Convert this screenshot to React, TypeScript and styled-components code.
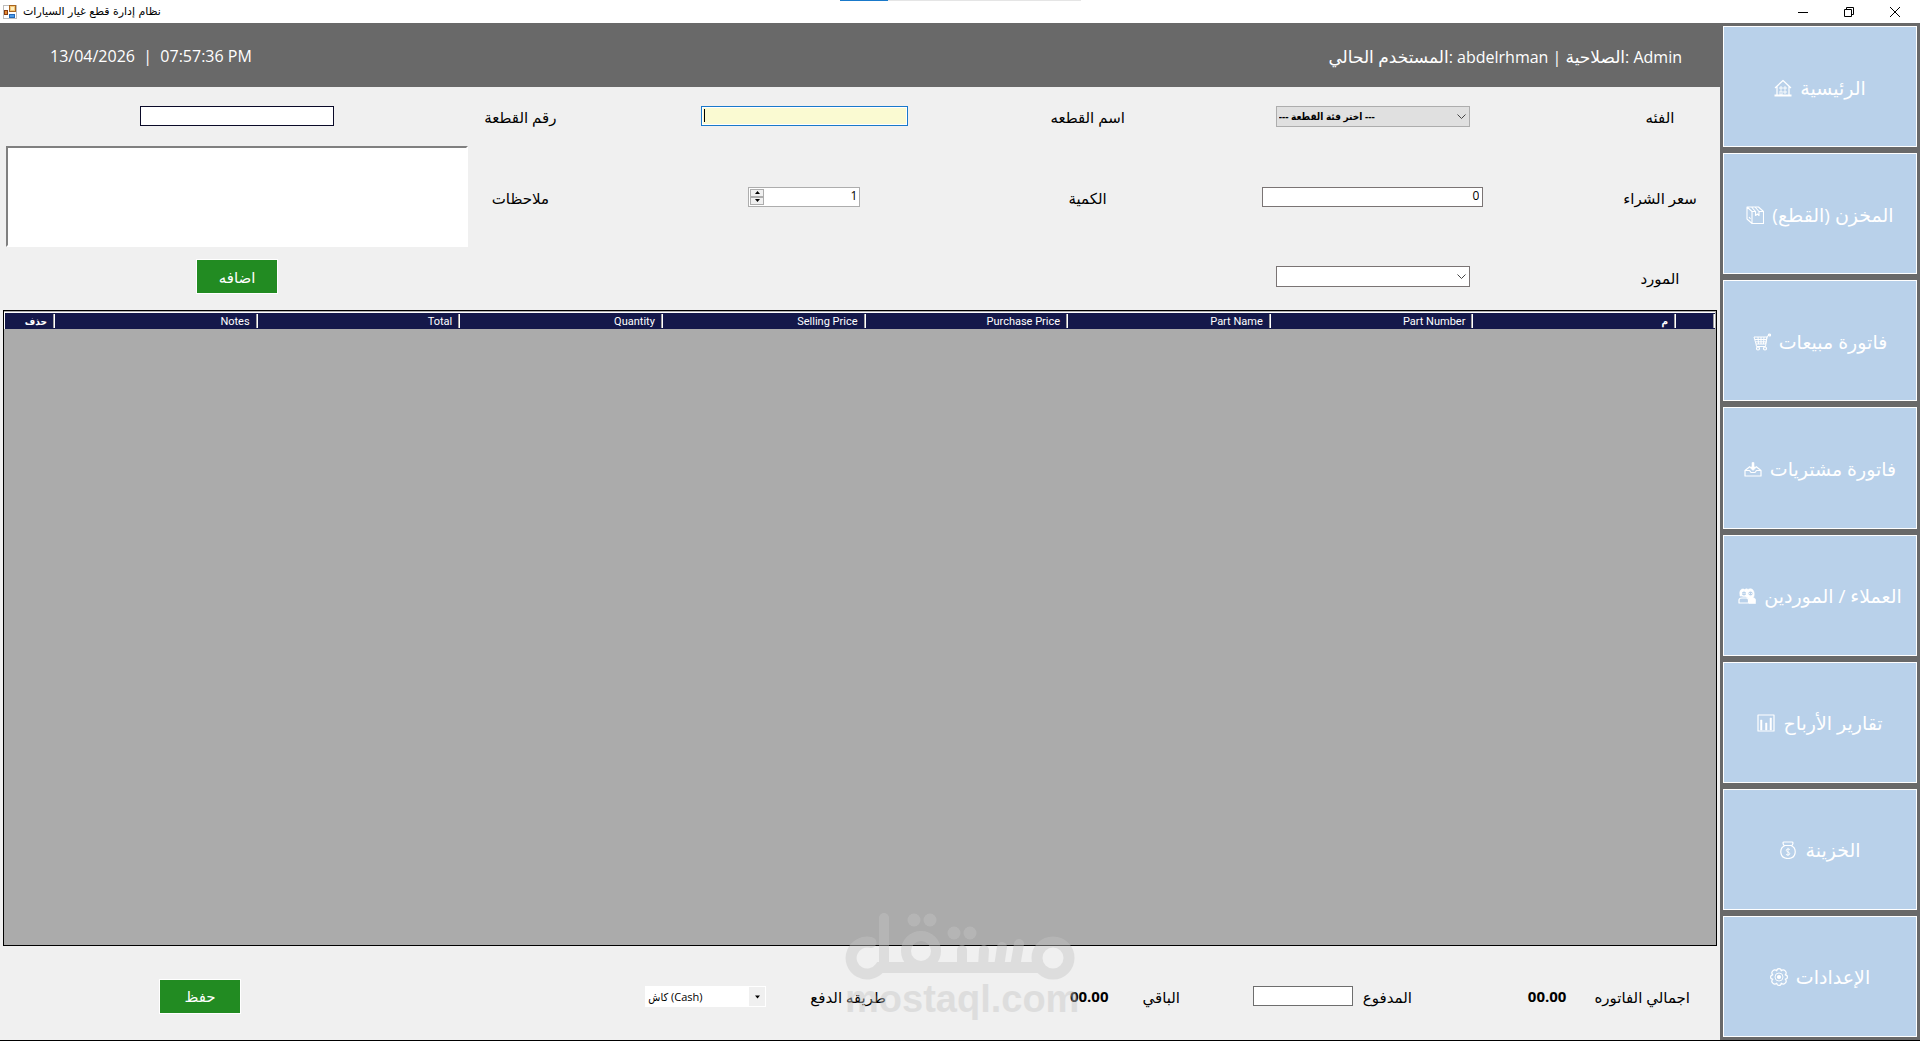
import React from 'react';
import styled, { createGlobalStyle } from 'styled-components';

const GlobalStyle = createGlobalStyle`
  *, *::before, *::after { box-sizing: border-box; }
  body { margin: 0; background: #f0f0f0; }
  body, button, input, select, textarea {
    font-family: 'Open Sans', 'DejaVu Sans', sans-serif;
    font-size: 15px;
    color: #000;
  }
`;

const Window = styled.div`
  position: relative;
  display: flex;
  flex-direction: column;
  min-height: 100vh;
  border-bottom: 1px solid #000;
`;

const TitleBar = styled.header`
  display: flex;
  align-items: center;
  height: 23px;
  padding: 0 2px 0 3px;
  background: #fff;
`;

const Title = styled.h1`
  flex: 1;
  margin: 0 0 0 4px;
  font: 11px/20px 'DejaVu Sans', sans-serif;
`;

const WindowButton = styled.button`
  display: grid;
  place-items: center;
  width: 46px;
  height: 20px;
  padding: 0;
  border: 0;
  background: transparent;
`;

const LoadingLine = styled.div`
  position: absolute;
  top: 0;
  left: 840px;
  width: 241px;
  height: 1px;
  background: linear-gradient(90deg, #1979ca 20%, #e5e5e5 20%);
`;

const Body = styled.div`
  flex: 1;
  display: grid;
  grid-template-columns: minmax(0, 1fr) 200px;
`;

const Main = styled.main`
  position: relative;
  display: flex;
  flex-direction: column;
`;

const StatusBar = styled.div`
  display: flex;
  justify-content: space-between;
  align-items: center;
  height: 64px;
  padding: 2px 38px 0 50px;
  background: #696969;
  color: #fff;
  font-size: 16px;
  white-space: pre;
`;

const ArabicPart = styled.span`
  font-size: 17px;
`;

const Form = styled.form`
  direction: rtl;
  display: grid;
  grid-template-columns: 100fr 474fr 96fr 470fr 98fr 468fr;
  grid-template-rows: 58px 103px 57px;
  align-items: center;
  justify-items: center;
  padding: 0 10px 5px 3px;
`;

const Label = styled.label`
  padding-top: 2px;
  line-height: 20px;
  white-space: nowrap;
`;

const LastCell = styled.div`
  grid-column: 6;
`;

const TextInput = styled.input<{ $width: number; $edge?: string }>`
  width: ${(p) => p.$width}px;
  height: 20px;
  padding: 0 3px 2px;
  border: 1px solid ${(p) => p.$edge ?? '#6e6e6e'};
  border-radius: 0;
  background: #fff;
  font-size: 12px;
  text-align: right;
  direction: ltr;
  outline: 0;
`;

const ActiveInput = styled(TextInput)`
  background: linear-gradient(#000, #000) 2px 2px / 1px 13px no-repeat, #fafad2;
  box-shadow: inset 0 0 0 1px #fff;
`;

const Notes = styled.textarea`
  width: calc(100% - 6px);
  height: 101px;
  resize: none;
  border: 2px solid;
  border-color: #808080 #fff #fff #808080;
  border-radius: 0;
  background: #fff;
  outline: 0;
`;

const SelectBox = styled.div<{ $width: number }>`
  position: relative;
  display: flex;
  align-items: center;
  direction: ltr;
  width: ${(p) => p.$width}px;
  height: 21px;

  svg { position: absolute; right: 3px; pointer-events: none; }
`;

const Select = styled.select<{ $kind: 'disabled' | 'plain' | 'flat' }>`
  display: block;
  appearance: none;
  width: 100%;
  height: 100%;
  padding: 0 2px;
  border: 1px solid ${(p) => (p.$kind === 'disabled' ? '#adadad' : p.$kind === 'flat' ? '#fff' : '#7a7474')};
  border-radius: 0;
  background: ${(p) => (p.$kind === 'disabled' ? '#e0e0e0' : p.$kind === 'flat' ? 'linear-gradient(90deg, transparent calc(100% - 16px), #f0f0f0 0), #fff' : '#fff')};
  font: 11px 'Open Sans', 'DejaVu Sans Condensed', 'DejaVu Sans', sans-serif;
  font-size: ${(p) => (p.$kind === 'disabled' ? 10 : 11)}px;
  font-weight: ${(p) => (p.$kind === 'disabled' ? 700 : 400)};
  outline: 0;
`;

const Stepper = styled.div`
  display: flex;
  direction: ltr;
  width: 112px;
  height: 20px;
  padding: 1px;
  border: 1px solid #adadad;
  background: #fff;
`;

const StepButtons = styled.div`
  display: grid;
  width: 14px;
`;

const StepButton = styled.button`
  display: grid;
  place-items: center;
  padding: 0;
  border: 1px solid #adadad;
  background: #f0f0f0;
  min-height: 0;
`;

const StepValue = styled.input`
  flex: 1;
  min-width: 0;
  padding: 0 1px 2px;
  border: 0;
  background: transparent;
  font-size: 12px;
  text-align: right;
  appearance: textfield;
  outline: 0;
  &::-webkit-inner-spin-button { display: none; }
`;

const ActionButton = styled.button`
  display: block;
  width: 82px;
  height: 35px;
  padding: 0;
  border: 1px solid #fff;
  background: #228b22;
  color: #fff;
`;

const GridFrame = styled.section`
  flex: 1;
  margin: 0 3px;
  padding: 1px 1px 0 0;
  border: 1px solid #000;
  background: #ababab;
`;

const PartsTable = styled.table`
  direction: rtl;
  width: 100%;
  table-layout: fixed;
  border-spacing: 0;
  border-top: 1px solid #fff;
  border-left: 1px solid #fff;
`;

const HeadCell = styled.th<{ $width?: number }>`
  width: ${(p) => (p.$width ? p.$width + 'px' : 'auto')};
  height: 16px;
  padding: 0 8px 0 0;
  background: linear-gradient(#fff, #fff) right center / 1px 14px no-repeat,
    linear-gradient(#a0a0a0, #a0a0a0) right 1px center / 1px 14px no-repeat, #14184a;
  color: #fff;
  font: 11px/15px Roboto, 'DejaVu Sans', sans-serif;
  text-align: right;

  &:lang(ar) { font: 700 10px/15px 'DejaVu Sans Condensed', 'DejaVu Sans', sans-serif; }
`;

const Summary = styled.form`
  direction: rtl;
  display: grid;
  grid-template-columns: 278fr 232fr 294fr 645fr 241fr;
  align-items: center;
  height: 94px;
  padding: 6px 30px 0 0;
`;

const Pair = styled.div<{ $gap: number }>`
  display: flex;
  align-items: center;
  gap: ${(p) => p.$gap}px;
`;

const Amount = styled.output`
  font-weight: 700;
  line-height: 20px;
`;

const Watermark = styled.div`
  position: absolute;
  left: 845px;
  bottom: 24px;
  width: 230px;
  opacity: 0.42;
  color: #c5c5c5;
  font: 700 38px/34px 'Liberation Sans', sans-serif;
  white-space: nowrap;
  pointer-events: none;

  svg { display: block; }
`;

const Sidebar = styled.nav`
  display: grid;
  grid-auto-rows: 1fr;
  gap: 6px;
  padding: 3px;
  background: #696969;
`;

const NavButton = styled.button`
  direction: rtl;
  display: flex;
  align-items: center;
  justify-content: center;
  gap: 8px;
  padding: 2px 0 0;
  border: 1px solid #fff;
  background: #b9d1ea;
  color: #fff;
  font-size: 19px;
  white-space: nowrap;
`;

const Glyph = ({ children }: { children: React.ReactNode }) => (
  <svg width="18" height="18" viewBox="0 0 18 18" fill="none" stroke="#fff" strokeWidth="1.2" strokeLinejoin="round" aria-hidden="true">
    {children}
  </svg>
);

const AppIcon = () => (
  <svg width="16" height="16" viewBox="0 0 16 16" aria-hidden="true">
    <rect x=".5" y="1.500" width="13" height="13" fill="#fff" stroke="#bdbdbd" />
    <rect x="6.500" y="1.500" width="6" height="6" fill="#f5c878" stroke="#a8641e" />
    <rect x="8" y="3" width="3" height="3" fill="#fff0c0" />
    <rect x="1.500" y="6.500" width="3" height="4" fill="#e88a30" stroke="#873c10" />
    <rect x="6.500" y="10.500" width="5" height="3" fill="#4c9be8" stroke="#2469b8" />
  </svg>
);

const Chevron = () => (
  <svg width="11" height="9" viewBox="0 0 11 9" fill="none" stroke="#444" aria-hidden="true">
    <path d="M1.500 2.500 5.500 6.500 9.500 2.500" />
  </svg>
);

const DropArrow = () => (
  <svg width="11" height="9" viewBox="0 0 11 9" aria-hidden="true">
    <path d="M3 3.500H8L5.500 6.500Z" />
  </svg>
);

const StepArrow = ({ up }: { up?: boolean }) => (
  <svg width="5" height="3" viewBox="0 0 5 3" aria-hidden="true">
    <path d={up ? 'M0 3 2.500 0 5 3Z' : 'M0 0H5L2.500 3Z'} />
  </svg>
);

const navItems = [
  {
    text: 'الرئيسية',
    icon: <><path d="M1 9 9 1.500 17 9M3 7.500V16M15 7.500V16" /><path d="M.5 16.500H17.500" strokeWidth="2" /><path d="M6 8H8V10H6ZM10 8H12V10H10ZM6 12H8V16H6ZM10 12H12V14H10Z" strokeWidth=".9" /></>,
  },
  {
    text: 'المخزن (القطع)',
    icon: <path d="M1 1H12.500L17.500 5.500V17.500H6L1 13ZM1 1 6 5.500V17.500M6 5.500H9.500L5.500 1M9.500 5.500V9.500L11.500 8 13 9.500V5.500L9 1M13 5.500H17.500M3 11 4.500 13" strokeWidth="1.100" />,
  },
  {
    text: 'فاتورة مبيعات',
    icon: <><path d="M1 4H14L12.500 11H3ZM17 2H15.500L14 4 12.500 13.500H3.500L3 11M2 6.500H13M2.500 8.800H12.500M5 4 5.500 11M8 4V11M11 4 10.500 11" strokeWidth="1" /><circle cx="5" cy="15.500" r="1.500" /><circle cx="12" cy="15.500" r="1.500" /><circle cx="16.500" cy="2" r="1" /></>,
  },
  {
    text: 'فاتورة مشتريات',
    icon: <><path d="M6 6.500 1 10.500V16H17V10.500L12 6.500M1 10.500H5.500L7 12.500H11L12.500 10.500H17" /><path d="M8 2.500H10V7H12.500L9 10.500 5.500 7H8Z" fill="#fff" strokeWidth=".6" /></>,
  },
  {
    text: 'العملاء / الموردين',
    icon: <><path d="M2 8C1 3 4 1 6.500 2.500Q9 1 10 2.500C14 0 17 4 16 9L15 11C18 11 18 13 17.500 16.500H11V12L7 9H2Z" fill="#fff" strokeWidth=".6" /><circle cx="6" cy="6.500" r="2.700" fill="#b9d1ea" /><circle cx="12.500" cy="6.500" r="2.700" fill="#b9d1ea" /><path d="M1 16V13Q1 11 4 11H8Q10.500 11 10.500 13V16Z" fill="#b9d1ea" /><path d="M5 6V7M7 6V7M11.500 6V7M13.500 6V7" strokeWidth=".8" /></>,
  },
  {
    text: 'تقارير الأرباح',
    icon: <><path d="M1 1H17V17H1Z" /><path d="M3.500 6H5V16H3.500ZM8.500 9H10V16H8.500ZM13 4H14.500V16H13Z" fill="#fff" strokeWidth=".5" /></>,
  },
  {
    text: 'الخزينة',
    icon: <><path d="M5 4.500Q3 1 5 1H13Q15 1 13 4.500ZM6 4.500C0 7 0 17.500 9 17.500S18 7 12 4.500" /><path d="M11 8.500Q9 7.500 7.500 8.500T9 11T10.500 13.500Q9 14.500 7 13.500M9 6.800V15" strokeWidth=".9" /></>,
  },
  {
    text: 'الإعدادات',
    icon: <><path d="M6.800 2.800A2.200 2.200 0 0 1 11.200 2.800A2.200 2.200 0 0 1 15.200 6.800A2.200 2.200 0 0 1 15.200 11.200A2.200 2.200 0 0 1 11.200 15.200A2.200 2.200 0 0 1 6.800 15.200A2.200 2.200 0 0 1 2.800 11.200A2.200 2.200 0 0 1 2.800 6.800A2.200 2.200 0 0 1 6.800 2.800Z" /><circle cx="9" cy="9" r="4" strokeWidth=".9" /><circle cx="9" cy="9" r="1.500" fill="#fff" /></>,
  },
];

const columns = ['Part Number', 'Part Name', 'Purchase Price', 'Selling Price', 'Quantity', 'Total', 'Notes'];

const MostaqlLogo = () => (
  <svg width="230" height="69" viewBox="0 0 230 69" fill="none" stroke="#c5c5c5" strokeLinecap="round" aria-hidden="true">
    <path d="M26 29.500A16 16 0 1 0 35 54.500H192" strokeWidth="11" />
    <path d="M39 5V52" strokeWidth="10" />
    <circle cx="76" cy="38" r="15" strokeWidth="10" />
    <path d="M117 54V37M138 54 139 37M154 54 157 34M170 54 174 31" strokeWidth="10" />
    <circle cx="208" cy="45" r="16" strokeWidth="11" />
    <g fill="#c5c5c5" stroke="none">
      <circle cx="69" cy="7" r="6.500" /><circle cx="85" cy="7" r="6.500" />
      <circle cx="109" cy="20" r="6.500" /><circle cx="125" cy="20" r="6.500" />
    </g>
  </svg>
);

export default function App() {
  return (
    <Window>
      <GlobalStyle />
      <TitleBar>
        <AppIcon />
        <Title>نظام إدارة قطع غيار السيارات</Title>
        <WindowButton aria-label="Minimize">
          <svg width="10" height="10" stroke="#000"><path d="M0 5.500H10" /></svg>
        </WindowButton>
        <WindowButton aria-label="Restore">
          <svg width="10" height="10" fill="none" stroke="#000"><path d="M.5 2.500H7.500V9.500H.5ZM2.500 2.500V.5H9.500V7.500H7.500" /></svg>
        </WindowButton>
        <WindowButton aria-label="Close">
          <svg width="10" height="10" stroke="#000"><path d="M0 0 10 10M10 0 0 10" /></svg>
        </WindowButton>
      </TitleBar>
      <LoadingLine />
      <Body>
        <Main>
          <StatusBar>
            <time>13/04/2026{'  |  '}07:57:36 PM</time>
            <span><ArabicPart>المستخدم الحالي</ArabicPart>: abdelrhman | <ArabicPart>الصلاحية</ArabicPart>: Admin</span>
          </StatusBar>
          <Form>
            <Label htmlFor="category">الفئه</Label>
            <SelectBox $width={194}>
              <Select id="category" $kind="disabled"><option>--- اختر فئة القطعة ---</option></Select>
              <Chevron />
            </SelectBox>
            <Label htmlFor="partName">اسم القطعه</Label>
            <ActiveInput id="partName" $width={207} $edge="#1979ca" />
            <Label htmlFor="partNumber">رقم القطعة</Label>
            <TextInput id="partNumber" $width={194} $edge="#0a0a28" />

            <Label htmlFor="price">سعر الشراء</Label>
            <TextInput id="price" $width={221} $edge="#7a7474" defaultValue="0" />
            <Label htmlFor="quantity">الكمية</Label>
            <Stepper>
              <StepButtons>
                <StepButton type="button" aria-label="+"><StepArrow up /></StepButton>
                <StepButton type="button" aria-label="-"><StepArrow /></StepButton>
              </StepButtons>
              <StepValue id="quantity" type="number" defaultValue="1" />
            </Stepper>
            <Label htmlFor="notes">ملاحظات</Label>
            <Notes id="notes" />

            <Label htmlFor="supplier">المورد</Label>
            <SelectBox $width={194}>
              <Select id="supplier" $kind="plain"><option /></Select>
              <Chevron />
            </SelectBox>
            <LastCell><ActionButton type="button">اضافه</ActionButton></LastCell>
          </Form>
          <GridFrame>
            <PartsTable>
              <thead>
                <tr>
                  <HeadCell $width={39} />
                  <HeadCell scope="col" lang="ar">م</HeadCell>
                  {columns.map((name) => <HeadCell key={name} scope="col">{name}</HeadCell>)}
                  <HeadCell scope="col" lang="ar" $width={50}>حذف</HeadCell>
                </tr>
              </thead>
            </PartsTable>
          </GridFrame>
          <Summary>
            <Pair $gap={28}><Label htmlFor="total">اجمالي الفاتوره</Label><Amount id="total">00.00</Amount></Pair>
            <Pair $gap={10}><Label htmlFor="paid">المدفوع</Label><TextInput id="paid" $width={100} /></Pair>
            <Pair $gap={34}><Label htmlFor="rest">الباقي</Label><Amount id="rest">00.00</Amount></Pair>
            <Pair $gap={44}>
              <Label htmlFor="method">طريقه الدفع</Label>
              <SelectBox $width={121}>
                <Select id="method" $kind="flat"><option>كاش (Cash)</option></Select>
                <DropArrow />
              </SelectBox>
            </Pair>
            <ActionButton type="button">حفظ</ActionButton>
          </Summary>
          <Watermark><MostaqlLogo />mostaql.com</Watermark>
        </Main>
        <Sidebar>
          {navItems.map((item) => (
            <NavButton key={item.text}>{item.text}<Glyph>{item.icon}</Glyph></NavButton>
          ))}
        </Sidebar>
      </Body>
    </Window>
  );
}
